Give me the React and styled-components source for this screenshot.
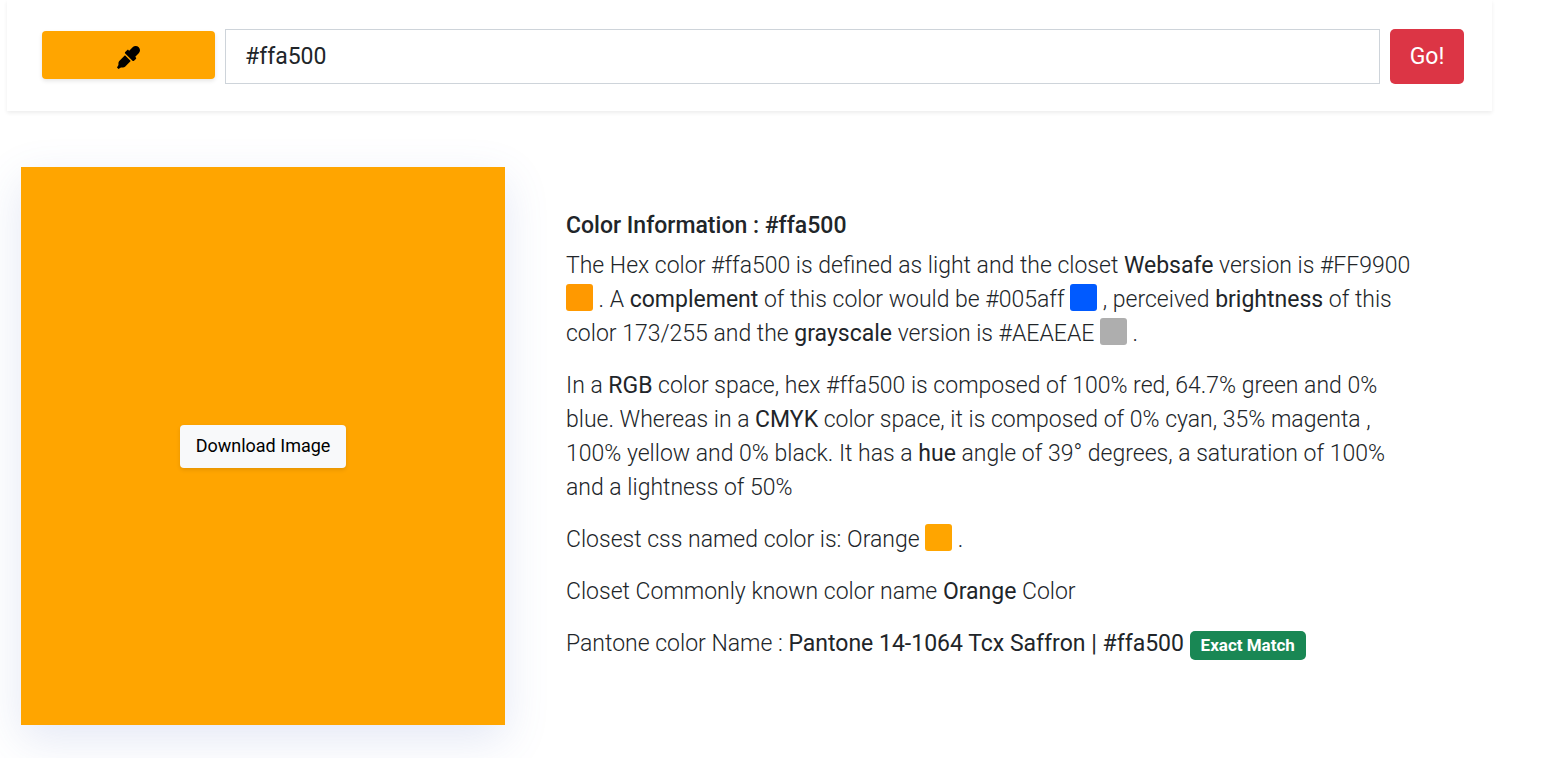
import { useState } from 'react'
import styled, { createGlobalStyle } from 'styled-components'
import { FaEyeDropper } from 'react-icons/fa'

const GlobalStyle = createGlobalStyle`
    * {
        box-sizing: border-box;
    }

    body {
        margin: 0;
        background: #fff;
        color: #212529;
        font-family: Roboto, sans-serif;
        font-size: 23px;
        line-height: 34px;
    }
`

const Page = styled.main`
    padding: 0 74px 33px 7px;
`

const SearchBar = styled.form`
    display: flex;
    align-items: flex-start;
    gap: 10px;
    padding: 29px 28px 27px 35px;
    background: #fff;
    box-shadow: 0 2px 4px rgba(0, 0, 0, 0.075);
`

const PickerButton = styled.button`
    display: flex;
    align-items: center;
    justify-content: center;
    width: 173px;
    height: 48px;
    margin-top: 2px;
    padding: 4px 0 0;
    border: 0;
    border-radius: 4px;
    background: ${props => props.$color};
    color: #000;
    font-size: 23px;
    box-shadow: 0 2px 4px rgba(0, 0, 0, 0.1);
    cursor: pointer;
`

const HexInput = styled.input`
    flex: 1;
    min-width: 0;
    height: 55px;
    padding: 0 19px;
    border: 1px solid #ced4da;
    background: #fff;
    color: #212529;
    font: inherit;
`

const GoButton = styled.button`
    width: 74px;
    height: 55px;
    padding: 0;
    border: 0;
    border-radius: 5px;
    background: #dc3545;
    color: #fff;
    font: inherit;
    cursor: pointer;
`

const Details = styled.section`
    display: grid;
    grid-template-columns: 484fr 850fr;
    gap: 61px;
    align-items: center;
    margin-top: 56px;
    padding: 0 76px 0 14px;
`

const Preview = styled.div`
    display: flex;
    align-items: center;
    justify-content: center;
    min-height: 558px;
    background: ${props => props.$color};
    box-shadow: 0 14px 42px rgba(90, 115, 190, 0.16);
`

const DownloadButton = styled.button`
    padding: 4px 16px 5px;
    border: 0;
    border-radius: 4px;
    background: #f8f9fa;
    color: #000;
    font: inherit;
    font-size: 18px;
    box-shadow: 0 2px 4px rgba(0, 0, 0, 0.1);
    cursor: pointer;
`

const Info = styled.article`
    padding-bottom: 4px;
    font-weight: 300;
`

const Title = styled.h1`
    margin: 0 0 6px;
    font-size: 23px;
    font-weight: 500;
`

const Text = styled.p`
    margin: 0 0 18px;

    strong {
        font-weight: 400;
    }
`

const Swatch = styled.span`
    display: inline-block;
    width: 27px;
    height: 27px;
    border-radius: 3px;
    background: ${props => props.$color};
    vertical-align: -4px;
`

const Badge = styled.span`
    display: inline-block;
    padding: 0 11px;
    border-radius: 5px;
    background: #198754;
    color: #fff;
    font-size: 17px;
    font-weight: 700;
    line-height: 29px;
`

export default function App() {
    const [hex, setHex] = useState('#ffa500')

    return (
        <Page>
            <GlobalStyle />
            <SearchBar onSubmit={e => e.preventDefault()}>
                <PickerButton type="button" $color="#ffa500" aria-label="Pick a color">
                    <FaEyeDropper />
                </PickerButton>
                <HexInput aria-label="Hex color" value={hex} onChange={e => setHex(e.target.value)} />
                <GoButton type="submit">Go!</GoButton>
            </SearchBar>

            <Details>
                <Preview $color="#ffa500">
                    <DownloadButton type="button">Download Image</DownloadButton>
                </Preview>
                <Info>
                    <Title>Color Information : #ffa500</Title>
                    <Text>
                        The Hex color #ffa500 is defined as light and the closet <strong>Websafe</strong> version
                        is #FF9900 <Swatch $color="#ff9900" /> . A <strong>complement</strong> of this color would
                        be #005aff <Swatch $color="#005aff" /> , perceived <strong>brightness</strong> of this
                        color 173/255 and the <strong>grayscale</strong> version is #AEAEAE <Swatch $color="#aeaeae" /> .
                    </Text>
                    <Text>
                        In a <strong>RGB</strong> color space, hex #ffa500 is composed of 100% red, 64.7% green and
                        0% blue. Whereas in a <strong>CMYK</strong> color space, it is composed of 0% cyan, 35%
                        magenta , 100% yellow and 0% black. It has a <strong>hue</strong> angle of 39° degrees, a
                        saturation of 100% and a lightness of 50%
                    </Text>
                    <Text>
                        Closest css named color is: Orange <Swatch $color="#ffa500" /> .
                    </Text>
                    <Text>
                        Closet Commonly known color name <strong>Orange</strong> Color
                    </Text>
                    <Text>
                        Pantone color Name : <strong>Pantone 14-1064 Tcx Saffron | #ffa500</strong> <Badge>Exact Match</Badge>
                    </Text>
                </Info>
            </Details>
        </Page>
    )
}
